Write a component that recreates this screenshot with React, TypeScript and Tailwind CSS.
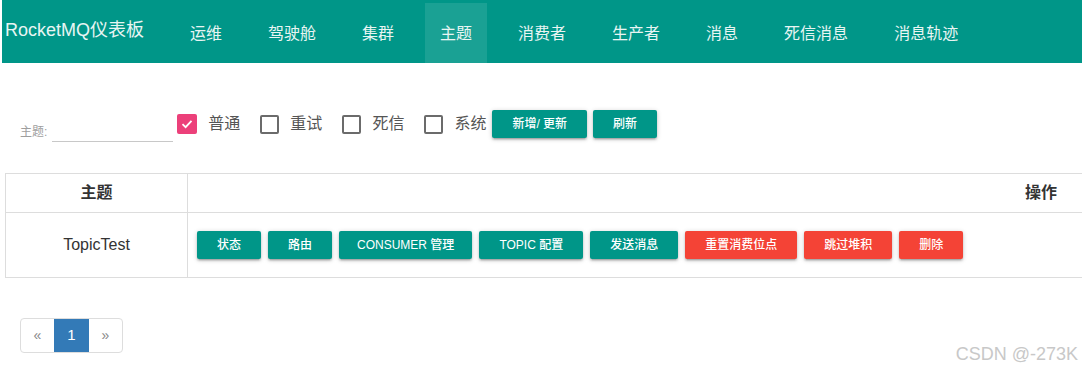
import React from "react";

const FONT = '"Liberation Sans", "Noto Sans CJK SC", Arial, sans-serif';

const navItems = ["运维", "驾驶舱", "集群", "主题", "消费者", "生产者", "消息", "死信消息", "消息轨迹"];

const shadow = "shadow-[0_2px_2px_0_rgba(0,0,0,0.14),0_3px_1px_-2px_rgba(0,0,0,0.12),0_1px_5px_0_rgba(0,0,0,0.2)]";

function Btn({ children, red, px = "px-5" }: { children: React.ReactNode; red?: boolean; px?: string }) {
  return (
    <button
      className={`h-7 ${px} rounded-[2px] text-[12px] font-medium text-white leading-7 whitespace-nowrap ${shadow} ${
        red ? "bg-[#f44336]" : "bg-[#009688]"
      }`}
    >
      {children}
    </button>
  );
}

function Check({ label, checked }: { label: string; checked?: boolean }) {
  return (
    <div className="flex items-center h-7">
      {checked ? (
        <div className="w-[20px] h-[20px] rounded-[2px] bg-[#ec407a] flex items-center justify-center">
          <svg width="14" height="14" viewBox="0 0 14 14">
            <path d="M2.5 7.2 L5.6 10.2 L11.5 3.8" fill="none" stroke="white" strokeWidth="1.8" />
          </svg>
        </div>
      ) : (
        <div className="w-[19px] h-[19px] rounded-[2px] border-2 border-[#6b6b6b]" />
      )}
      <span className="ml-[11px] text-[16px] text-[#555]">{label}</span>
    </div>
  );
}

export default function App() {
  return (
    <div className="relative w-[1082px] h-[369px] bg-white overflow-hidden" style={{ fontFamily: FONT }}>
      {/* nav */}
      <nav className="ml-[2px] h-[63px] bg-[#009688] flex items-stretch text-[#e8f5f3]">
        <div className="pl-[3px] w-[173px] flex items-center text-[18px] pb-[2px]">RocketMQ仪表板</div>
        <div className="flex gap-4 pt-[3px]">
          {navItems.map((n) => (
            <div
              key={n}
              className={`px-[15px] flex items-center text-[16px] pt-[1px] ${n === "主题" ? "bg-white/10" : ""}`}
            >
              {n}
            </div>
          ))}
        </div>
      </nav>

      {/* filter row */}
      <div className="mt-[47px] flex items-start">
        <div className="ml-[20px] flex items-end h-[32px]">
          <span className="text-[12px] leading-4 text-[#9e9e9e] mb-[2px]">主题:</span>
          <div className="ml-[5px] w-[121px] h-[24px] border-b border-[#c8c8c8]" />
        </div>
        <div className="ml-[4px] flex items-center gap-[20px]">
          <Check label="普通" checked />
          <Check label="重试" />
          <Check label="死信" />
          <Check label="系统" />
        </div>
        <div className="ml-[6px] flex gap-[6px]">
          <Btn>新增/ 更新</Btn>
          <Btn>刷新</Btn>
        </div>
      </div>

      {/* table */}
      <div className="mt-[31px] pl-[5px] overflow-hidden">
        <table className="w-[1078px] border-collapse text-[16px] text-[#333]">
          <thead>
            <tr>
              <th className="w-[182px] h-[39px] border border-[#ddd] font-bold text-center">主题</th>
              <th className="h-[39px] border border-[#ddd] font-bold text-right pr-[25px]">操作</th>
            </tr>
          </thead>
          <tbody>
            <tr>
              <td className="h-[65px] border border-[#ddd] text-center">TopicTest</td>
              <td className="h-[65px] border border-[#ddd] pl-[9px]">
                <div className="flex gap-[7px]">
                  <Btn>状态</Btn>
                  <Btn>路由</Btn>
                  <Btn px="px-[18px]">CONSUMER 管理</Btn>
                  <Btn>TOPIC 配置</Btn>
                  <Btn>发送消息</Btn>
                  <Btn red>重置消费位点</Btn>
                  <Btn red>跳过堆积</Btn>
                  <Btn red>删除</Btn>
                </div>
              </td>
            </tr>
          </tbody>
        </table>
      </div>

      {/* pagination */}
      <div className="mt-[40px] ml-[20px] inline-flex h-[35px] border border-[#ddd] rounded-[4px] overflow-hidden text-[14px]">
        <div className="w-[33px] flex items-center justify-center text-[#888]">«</div>
        <div className="w-[35px] flex items-center justify-center bg-[#337ab7] text-white text-[15px]">1</div>
        <div className="w-[33px] flex items-center justify-center text-[#888]">»</div>
      </div>

      {/* watermark */}
      <div className="absolute right-[4px] top-[341px] text-[18px] text-[#c8c8c8]">CSDN @-273K</div>
    </div>
  );
}
